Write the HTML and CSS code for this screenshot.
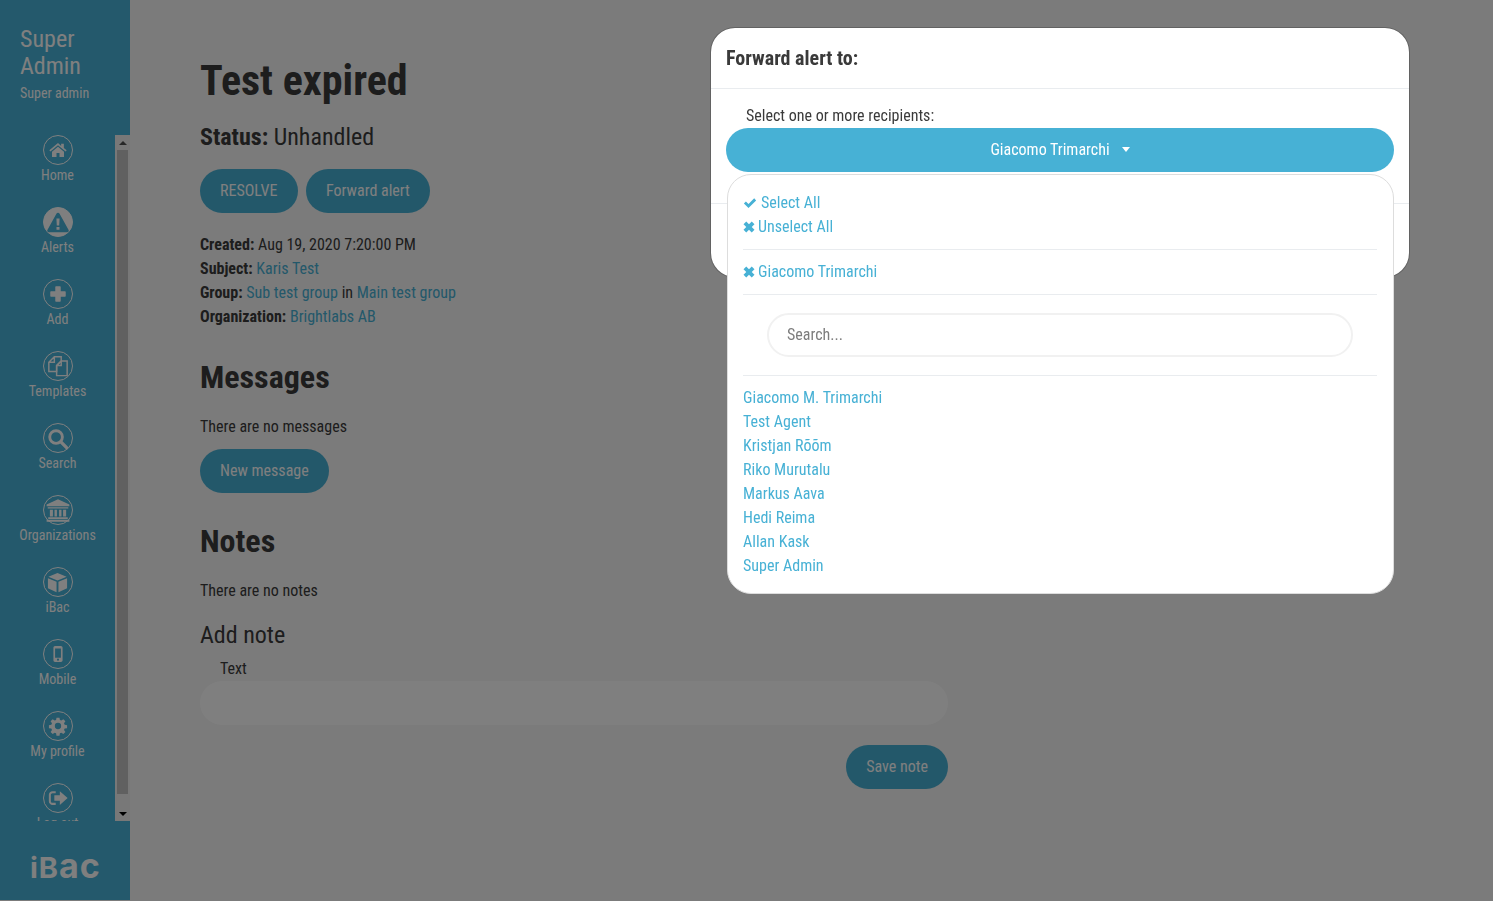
FILE: index.html
```html
<!DOCTYPE html>
<html lang="en">
<head>
  <meta charset="UTF-8">
  <title>Test expired</title>
  <link rel="stylesheet" href="styles.css">
</head>
<body>
  <div class="page">
    <aside class="sidebar">
      <div class="user">
        <div class="user-name">Super Admin</div>
        <div class="user-role">Super admin</div>
      </div>
      <div class="nav-wrap">
        <nav class="nav">
          <a class="nav-item"><span class="nav-icon"><svg viewBox="0 0 24 24"><path d="M12 3.600 1.600 12.400l1.300 1.500L12 6.300l9.100 7.600 1.300-1.500-3.400-2.900V4.600h-3.200v2.500z"/><path d="M12 8 4.800 14v6.300h5.400v-4.800h3.600v4.800h5.400V14z"/></svg></span>Home</a>
          <a class="nav-item"><span class="nav-icon nav-icon-active"><svg viewBox="0 0 24 24"><path class="cut" d="M12 2.800c.7 0 1.300.4 1.600 1l9 16.200c.6 1.100-.2 2.300-1.500 2.300H2.900c-1.300 0-2.100-1.200-1.500-2.300l9-16.200c.3-.6.900-1 1.600-1z"/><path d="M10.400 8.500h3.200l-.4 7h-2.400zM10.500 17h3v2.800h-3z"/></svg></span>Alerts</a>
          <a class="nav-item"><span class="nav-icon"><svg viewBox="0 0 24 24"><path d="M9.500 3.500h5v6h6v5h-6v6h-5v-6h-6v-5h6z" stroke-linejoin="round" stroke-width="1.500" stroke="#fff"/></svg></span>Add</a>
          <a class="nav-item"><span class="nav-icon"><svg class="icon-22" viewBox="0 0 24 24" fill="none" stroke="#fff" stroke-width="1.600"><path d="M8 2h7.500v4.500l-5 5V18H2V8zM8 2v6H2"/><path d="M15.500 6.500H22v16H10.500v-11zM15.500 6.500v5h-5"/></svg></span>Templates</a>
          <a class="nav-item"><span class="nav-icon"><svg class="icon-23" viewBox="0 0 24 24" fill="none" stroke="#fff"><circle cx="10.500" cy="10.500" r="6.600" stroke-width="3"/><path d="m15.500 15.500 6 6" stroke-width="3.400" stroke-linecap="round"/></svg></span>Search</a>
          <a class="nav-item"><span class="nav-icon"><svg class="icon-26" viewBox="0 0 24 24"><path d="M12 2 1.500 7v1.500h21V7zM2.500 9.500h19v1.200h-19zM4.500 11.700h2.800v6.300H4.500zM8.800 11.700h2.200v6.300H8.800zM13 11.700h2.200v6.300H13zM16.700 11.700h2.800v6.300h-2.800zM3 18.800h18v1.600H3zM1.500 21h21v1.800h-21z"/></svg></span>Organizations</a>
          <a class="nav-item"><span class="nav-icon"><svg class="icon-23" viewBox="0 0 24 24"><path d="M12 2.200 21.500 6 12 9.800 2.500 6zM2 7.500l9 3.700v11L2 18zM22 7.500v10.500l-9 4.200v-11z"/></svg></span>iBac</a>
          <a class="nav-item"><span class="nav-icon"><svg viewBox="0 0 24 24"><path fill-rule="evenodd" d="M8.500 2.500h7c1.100 0 2 .9 2 2v15c0 1.100-.9 2-2 2h-7c-1.100 0-2-.9-2-2v-15c0-1.100.9-2 2-2zM8.500 5.500v11h7v-11zM12 17.500a1.300 1.300 0 1 0 0 2.600 1.300 1.300 0 0 0 0-2.600z"/></svg></span>Mobile</a>
          <a class="nav-item"><span class="nav-icon"><svg viewBox="0 0 24 24"><path fill-rule="evenodd" d="M10.200 2h3.600l.5 2.800 1.700.7 2.400-1.600 2.500 2.500-1.700 2.400.8 1.700 2.900.5v3.600l-2.900.5-.8 1.700 1.700 2.400-2.500 2.500-2.400-1.700-1.700.8-.5 2.800h-3.600l-.5-2.800-1.700-.8-2.400 1.700-2.500-2.500 1.700-2.400-.8-1.700-2.900-.5v-3.600l2.900-.5.8-1.700-1.700-2.400 2.500-2.500 2.400 1.600 1.700-.7zM12 8.200a3.800 3.800 0 1 0 0 7.600 3.800 3.800 0 0 0 0-7.600z"/></svg></span>My profile</a>
          <a class="nav-item"><span class="nav-icon"><svg class="icon-22" viewBox="0 0 24 24"><path d="M9.500 4.500H6C3.800 4.500 2 6.300 2 8.500v7c0 2.200 1.800 4 4 4h3.500v-2.200H6c-1 0-1.800-.8-1.800-1.800v-7c0-1 .8-1.800 1.800-1.800h3.500z"/><path d="M14 4.500 22.500 12 14 19.500V15H8V9h6z"/></svg></span>Log out</a>
        </nav>
        <div class="scrollbar">
          <span class="arrow arrow-up"></span>
          <span class="thumb"></span>
          <span class="arrow arrow-down"></span>
        </div>
      </div>
      <div class="logo">iB<span class="logo-low">ac</span></div>
    </aside>

    <main class="content">
      <h1>Test expired</h1>
      <h4 class="status"><b>Status:</b> Unhandled</h4>
      <div class="btn-row">
        <a class="btn">RESOLVE</a>
        <a class="btn">Forward alert</a>
      </div>
      <div class="info">
        <div><b>Created:</b> Aug 19, 2020 7:20:00 PM</div>
        <div><b>Subject:</b> <a>Karis Test</a></div>
        <div><b>Group:</b> <a>Sub test group</a> in <a>Main test group</a></div>
        <div><b>Organization:</b> <a>Brightlabs AB</a></div>
      </div>

      <h2>Messages</h2>
      <p>There are no messages</p>
      <a class="btn btn-new">New message</a>

      <h2 class="notes-title">Notes</h2>
      <p>There are no notes</p>
      <h4 class="add-note">Add note</h4>
      <form class="note-form">
        <label for="note">Text</label>
        <input type="text" id="note">
        <div class="note-actions"><a class="btn">Save note</a></div>
      </form>
    </main>
  </div>

  <div class="backdrop"></div>

  <div class="modal">
    <div class="modal-header">Forward alert to:</div>
    <div class="modal-body">
      <div class="modal-label">Select one or more recipients:</div>
      <div class="select-btn">Giacomo Trimarchi<span class="caret"></span></div>
    </div>
    <div class="modal-footer"><a class="btn btn-light">Send</a></div>

    <div class="dropdown">
      <div class="dd-section">
        <a class="dd-link"><svg class="tick" viewBox="0 0 16 16"><path d="M1 8.500 3.300 6.200l3 3L12.800 2.700 15 5l-8.700 8.700z"/></svg>Select All</a>
        <a class="dd-link"><svg class="cross" viewBox="0 0 14 14"><path d="M3.800.6 7 3.800 10.200.6 13.400 3.800 10.200 7l3.200 3.200-3.200 3.200L7 10.200l-3.200 3.200L.6 10.200 3.800 7 .6 3.800z"/></svg>Unselect All</a>
      </div>
      <div class="dd-section dd-selected">
        <a class="dd-link"><svg class="cross" viewBox="0 0 14 14"><path d="M3.800.6 7 3.800 10.200.6 13.400 3.800 10.200 7l3.200 3.200-3.200 3.200L7 10.200l-3.200 3.200L.6 10.200 3.800 7 .6 3.800z"/></svg>Giacomo Trimarchi</a>
      </div>
      <div class="dd-section dd-search">
        <input type="text" placeholder="Search...">
      </div>
      <div class="dd-list">
        <a class="dd-link">Giacomo M. Trimarchi</a>
        <a class="dd-link">Test Agent</a>
        <a class="dd-link">Kristjan Rõõm</a>
        <a class="dd-link">Riko Murutalu</a>
        <a class="dd-link">Markus Aava</a>
        <a class="dd-link">Hedi Reima</a>
        <a class="dd-link">Allan Kask</a>
        <a class="dd-link">Super Admin</a>
      </div>
    </div>
  </div>
</body>
</html>
```

FILE: styles.css
```css
* {
  box-sizing: border-box;
}
html, body {
  height: 100%;
}
body {
  margin: 0;
  overflow: hidden;
  background: #f6f6f6;
  color: #3a3a3a;
  font-family: "Roboto Condensed", Roboto, "Liberation Sans", sans-serif;
  font-stretch: 75%;
  font-size: 16px;
  line-height: 24px;
}
a {
  color: #47b1d5;
  text-decoration: none;
}
.page {
  display: flex;
  height: 900px;
}

/* sidebar */
.sidebar {
  width: 130px;
  flex: none;
  display: flex;
  flex-direction: column;
  background: #48b3d8;
  color: #fff;
}
.user {
  height: 135px;
  padding: 26px 20px 0;
}
.user-name {
  font-size: 24px;
  line-height: 27px;
}
.user-role {
  font-size: 14px;
  line-height: 20px;
  margin-top: 3px;
}
.nav-wrap {
  height: 686px;
  display: flex;
  overflow: hidden;
}
.nav {
  width: 115px;
  height: 686px;
  overflow: hidden;
}
.nav-item {
  display: flex;
  flex-direction: column;
  align-items: center;
  height: 72px;
  color: #fff;
  font-size: 14px;
  line-height: 20px;
}
.nav-icon {
  width: 30px;
  height: 30px;
  flex: none;
  border: 1px solid #fff;
  border-radius: 50%;
  display: flex;
  align-items: center;
  justify-content: center;
}
.nav-icon svg {
  width: 20px;
  height: 20px;
  flex: none;
  fill: #fff;
}
.nav-icon .icon-22 {
  width: 22px;
  height: 22px;
}
.nav-icon .icon-23 {
  width: 23px;
  height: 23px;
}
.nav-icon .icon-26 {
  width: 26px;
  height: 26px;
}
.nav-icon svg[fill="none"] {
  fill: none;
}
.nav-icon-active {
  background: #fff;
}
.nav-icon-active svg {
  width: 24px;
  height: 24px;
  fill: #fff;
}
.nav-icon-active .cut {
  fill: #48b3d8;
}
.scrollbar {
  width: 15px;
  flex: none;
  background: #f1f1f1;
  display: flex;
  flex-direction: column;
  align-items: center;
}
.arrow {
  height: 15px;
  width: 15px;
  flex: none;
  display: flex;
  align-items: center;
  justify-content: center;
}
.arrow::after {
  content: "";
  border-left: 4px solid transparent;
  border-right: 4px solid transparent;
}
.arrow-up::after {
  border-bottom: 4px solid #505050;
}
.arrow-down {
  margin-top: 12px;
}
.arrow-down::after {
  border-top: 4px solid #000;
}
.thumb {
  width: 11px;
  height: 644px;
  flex: none;
  background: #c1c1c1;
}
.logo {
  flex: 1;
  padding: 25px 0 0 30px;
  font-family: Inter, sans-serif;
  font-stretch: normal;
  font-weight: 700;
  font-size: 29px;
  line-height: 40px;
  letter-spacing: 1px;
}
.logo-low {
  font-size: 34px;
}

/* main column */
.content {
  flex: 1;
  padding: 56px 0 0 70px;
}
.content > * {
  max-width: 748px;
}
h1, h2, h4, p {
  margin: 0;
}
h1 {
  font-size: 42px;
  line-height: 50px;
}
h2 {
  font-size: 32px;
  line-height: 38px;
  margin-top: 29px;
}
h4 {
  font-size: 24px;
  line-height: 29px;
  font-weight: 400;
}
.status {
  margin-top: 17px;
}
.btn-row {
  display: flex;
  gap: 8.5px;
  margin-top: 17px;
}
.btn {
  display: inline-block;
  height: 44px;
  padding: 0 20px;
  border-radius: 22px;
  background: #47b1d5;
  color: #fff;
  line-height: 44px;
}
.info {
  margin-top: 20px;
}
p {
  margin-top: 19px;
}
.btn-new {
  margin-top: 10px;
}
.notes-title {
  margin-top: 29px;
}
.add-note {
  margin-top: 18px;
}
.note-form label {
  display: block;
  padding-left: 20px;
  margin-top: 6px;
  line-height: 25px;
}
.note-form input {
  display: block;
  width: 100%;
  height: 44px;
  border: 0;
  border-radius: 22px;
  background: #fff;
}
.note-actions {
  display: flex;
  justify-content: flex-end;
  margin-top: 20px;
}

/* modal */
.backdrop {
  position: fixed;
  inset: 0;
  background: rgba(0, 0, 0, 0.5);
}
.modal {
  position: absolute;
  left: 710px;
  top: 27px;
  width: 700px;
  background: #fff;
  border: 1px solid rgba(0, 0, 0, 0.2);
  border-radius: 25px;
  background-clip: padding-box;
}
.modal-header {
  height: 61px;
  padding: 0 15px;
  border-bottom: 1px solid #e9ecef;
  font-size: 20px;
  font-weight: 700;
  line-height: 60px;
}
.modal-body {
  height: 114px;
  padding: 15px 15px 0;
}
.modal-label {
  padding-left: 20px;
}
.select-btn {
  height: 44px;
  border-radius: 22px;
  background: #47b1d5;
  color: #fff;
  line-height: 43px;
  text-align: center;
}
.caret {
  display: inline-block;
  margin-left: 12px;
  vertical-align: 3px;
  border-top: 5px solid #fff;
  border-left: 4.500px solid transparent;
  border-right: 4.500px solid transparent;
}
.modal-footer {
  display: flex;
  justify-content: flex-end;
  padding: 15px 15px 14px;
  border-top: 1px solid #e9ecef;
}
.dropdown {
  position: absolute;
  left: 15.5px;
  top: 146px;
  width: 667px;
  height: 420px;
  padding: 0 15.5px;
  background: #fff;
  border: 1px solid #ddd;
  border-radius: 24px;
}
.dd-section {
  border-bottom: 1px solid #e9ecef;
}
.dd-section:first-child {
  padding-top: 16px;
  height: 75px;
}
.dd-selected {
  height: 45px;
  padding-top: 10px;
}
.dd-search {
  height: 81px;
  padding: 18px 24px 0;
}
.dd-search input {
  display: block;
  width: 586px;
  height: 44px;
  padding: 0 18px 2px;
  border: 2px solid #f1f1f1;
  border-radius: 22px;
  font: inherit;
  font-stretch: 75%;
  color: #333;
}
.dd-search input::placeholder {
  color: #7d7d7d;
}
.dd-list {
  padding-top: 10px;
}
.dd-link {
  display: block;
  height: 24px;
}
.tick {
  width: 14px;
  height: 14px;
  margin-right: 4px;
  vertical-align: -2px;
  fill: #47b1d5;
}
.cross {
  width: 12px;
  height: 12px;
  margin-right: 3px;
  vertical-align: -1px;
  fill: #47b1d5;
}
```
